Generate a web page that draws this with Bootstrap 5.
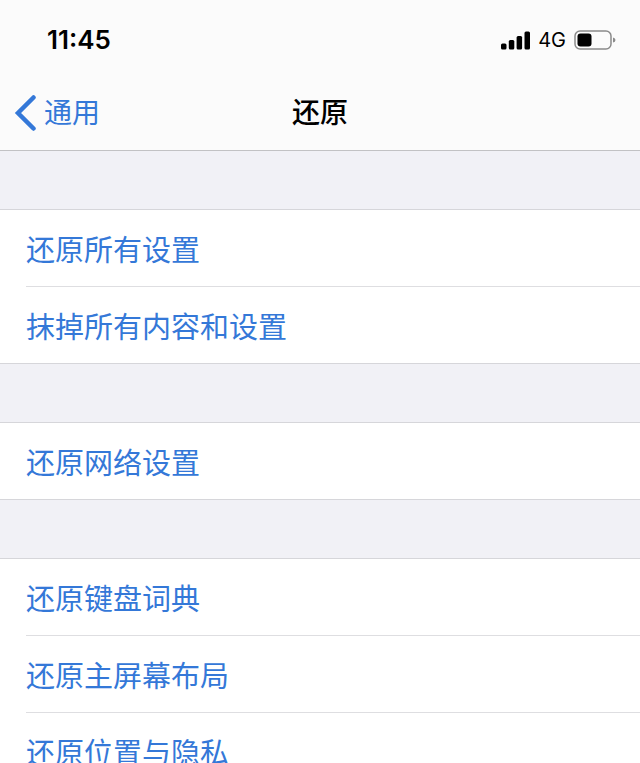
<!DOCTYPE html>
<html lang="zh-CN">
<head>
<meta charset="utf-8">
<meta name="viewport" content="width=device-width, initial-scale=1">
<title>还原</title>
<link href="https://cdn.jsdelivr.net/npm/bootstrap@5.3.0/dist/css/bootstrap.min.css" rel="stylesheet">
<style>
body { font-family: Inter, "Noto Sans CJK SC", sans-serif; background: #f1f1f6; color: #000; }
.top-area { background: #fbfbfb; border-bottom: 1px solid #c2c2c4; }
.status-bar { height: 76px; padding: 4px 24px 0 47px; }
.clock { font-size: 26px; font-weight: 600; line-height: 32px; }
.network { font-size: 20px; line-height: 32px; }
.title-bar { height: 74px; padding: 0 14px; font-size: 28px; line-height: 40px; }
.back-link, .back-link:hover { color: #3478d8; }
.page-title { font-size: 28px; line-height: 40px; font-weight: 500; }
.groups { gap: 58px; padding-top: 58px; }
.option-group { background: #fff; border: solid #d6d6da; border-width: 1px 0; padding-left: 26px; }
.option-group > li + li { border-top: 1px solid #dedee1; }
.option { height: 76px; font-size: 29px; line-height: 44px; font-weight: 400; color: #3478d8; padding: 6px 0 0; }
</style>
<script src="https://cdn.jsdelivr.net/npm/bootstrap@5.3.0/dist/js/bootstrap.bundle.min.js"></script>
</head>
<body class="vh-100 overflow-hidden">
<header class="top-area">
  <div class="status-bar d-flex align-items-center justify-content-between">
    <span class="clock">11:45</span>
    <div class="d-flex align-items-center gap-2">
      <svg width="30" height="19" viewBox="0 0 30 19" role="img" aria-label="信号">
        <rect x="1" y="12.500" width="5.500" height="6" rx="1.500"/><rect x="8.800" y="9" width="5.500" height="9.500" rx="1.500"/><rect x="16.600" y="5" width="5.500" height="13.500" rx="1.500"/><rect x="24.500" y="0.500" width="5.500" height="18" rx="1.500"/>
      </svg>
      <span class="network">4G</span>
      <svg width="42" height="20" viewBox="0 0 42 20" role="img" aria-label="电量">
        <rect x="1" y="1" width="36" height="18" rx="5" fill="none" stroke="#8b8b8b" stroke-width="1.500"/>
        <rect x="3.500" y="3.500" width="14" height="13" rx="3"/>
        <path d="M39 7.500q2.500.5 2.500 2.500t-2.500 2.500z" fill="#8b8b8b"/>
      </svg>
    </div>
  </div>
  <nav class="title-bar row g-0 align-items-center">
    <div class="col d-flex">
      <a href="#" class="back-link d-flex align-items-center gap-2 text-decoration-none">
        <svg width="22" height="36" viewBox="0 0 22 36" fill="none" stroke="currentColor" stroke-width="4.500" stroke-linecap="round" stroke-linejoin="miter" aria-hidden="true"><path d="M19.500 2.500L4 18l15.500 15.500"/></svg>
        <span>通用</span>
      </a>
    </div>
    <h1 class="page-title col-auto m-0">还原</h1>
    <div class="col"></div>
  </nav>
</header>
<main class="groups d-flex flex-column">
  <ul class="option-group list-unstyled m-0">
    <li><button type="button" class="option btn border-0 rounded-0 w-100 text-start">还原所有设置</button></li>
    <li><button type="button" class="option btn border-0 rounded-0 w-100 text-start">抹掉所有内容和设置</button></li>
  </ul>
  <ul class="option-group list-unstyled m-0">
    <li><button type="button" class="option btn border-0 rounded-0 w-100 text-start">还原网络设置</button></li>
  </ul>
  <ul class="option-group list-unstyled m-0">
    <li><button type="button" class="option btn border-0 rounded-0 w-100 text-start">还原键盘词典</button></li>
    <li><button type="button" class="option btn border-0 rounded-0 w-100 text-start">还原主屏幕布局</button></li>
    <li><button type="button" class="option btn border-0 rounded-0 w-100 text-start">还原位置与隐私</button></li>
  </ul>
</main>
</body>
</html>
